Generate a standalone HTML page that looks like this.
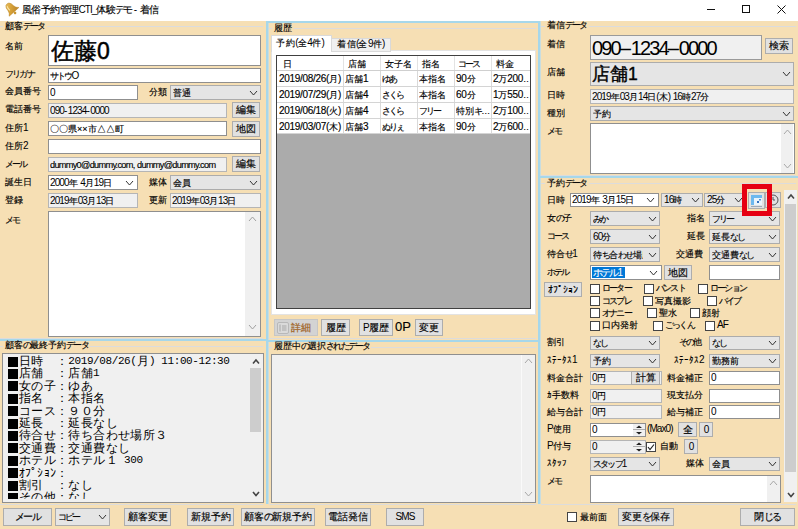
<!DOCTYPE html>
<html><head><meta charset="utf-8"><style>
html,body{margin:0;padding:0;}
body{width:798px;height:529px;overflow:hidden;position:relative;background:#F6DFB4;font-family:"Liberation Sans",sans-serif;font-feature-settings:"palt";}
.b{position:absolute;box-sizing:content-box;}
.t{position:absolute;white-space:nowrap;-webkit-text-stroke:0.15px currentColor;}
svg.b{overflow:visible;}
</style></head><body>
<div class="b" style="left:0px;top:0px;width:798px;height:21px;background:#fff;"></div>
<svg class="b" style="left:3px;top:1px" width="17" height="16"><defs><linearGradient id="gg" x1="0" y1="0" x2="1" y2="1"><stop offset="0" stop-color="#F0CF78"/><stop offset="0.5" stop-color="#D9A43A"/><stop offset="1" stop-color="#B8822A"/></linearGradient></defs><g transform="rotate(-42 8.5 8)"><path d="M6.5,1.8 Q8.5,0.6 10.5,1.8 Q12.2,3.2 12.2,7 Q12.4,10 15,11.8 L2,11.8 Q4.6,10 4.8,7 Q4.8,3.2 6.5,1.8 Z" fill="url(#gg)" stroke="#B98420" stroke-width="0.5"/><circle cx="8.5" cy="13.3" r="1.3" fill="#C99530"/><path d="M7,3 Q6.2,5 6.4,8" stroke="#FBE7A8" stroke-width="1" fill="none"/></g></svg>
<div class="t" style="left:22px;top:2.9px;font-size:9.5px;line-height:13.3px;color:#000;letter-spacing:-0.6px">風俗予約管理<span style="font-size:10px;letter-spacing:-0.9px;-webkit-text-stroke:0">CTI_</span>体験<span style="letter-spacing:-1.8px">デモ</span> <span style="font-size:10px;letter-spacing:-0.9px;-webkit-text-stroke:0"><span style="letter-spacing:0.4px">-</span></span> 着信</div>
<div class="b" style="left:707px;top:9px;width:8px;height:1px;background:#111;"></div>
<div class="b" style="left:742px;top:5px;width:6px;height:6px;background:transparent;border:1px solid #111;"></div>
<svg class="b" style="left:777px;top:5px" width="9" height="9"><path d="M0.5,0.5 L8.5,8.5 M8.5,0.5 L0.5,8.5" stroke="#111" stroke-width="1"/></svg>
<div class="b" style="left:-1px;top:26px;width:264px;height:311px;background:transparent;border:1px solid #DCDCDC;border-left:none;border-right:none"></div>
<div class="t" style="left:3px;top:21.5px;font-size:9px;line-height:9px;padding:0 2px 0 2px;background:#F6DFB4">顧客<span style="letter-spacing:-1.8px">データ</span></div>
<div class="t" style="left:5px;top:39.7px;font-size:9px;line-height:12.6px;color:#000;">名前</div>
<div class="t" style="left:5px;top:68.2px;font-size:9px;line-height:12.6px;color:#000;"><span style="letter-spacing:-1.8px">フリガナ</span></div>
<div class="t" style="left:5px;top:85.2px;font-size:9px;line-height:12.6px;color:#000;">会員番号</div>
<div class="t" style="left:5px;top:103.2px;font-size:9px;line-height:12.6px;color:#000;">電話番号</div>
<div class="t" style="left:5px;top:121.7px;font-size:9px;line-height:12.6px;color:#000;">住所<span style="font-size:10px;letter-spacing:-0.9px;-webkit-text-stroke:0">1</span></div>
<div class="t" style="left:5px;top:140.2px;font-size:9px;line-height:12.6px;color:#000;">住所<span style="font-size:10px;letter-spacing:-0.9px;-webkit-text-stroke:0">2</span></div>
<div class="t" style="left:5px;top:157.7px;font-size:9px;line-height:12.6px;color:#000;"><span style="letter-spacing:-1.8px">メール</span></div>
<div class="t" style="left:5px;top:175.7px;font-size:9px;line-height:12.6px;color:#000;">誕生日</div>
<div class="t" style="left:5px;top:193.7px;font-size:9px;line-height:12.6px;color:#000;">登録</div>
<div class="t" style="left:5px;top:213.7px;font-size:9px;line-height:12.6px;color:#000;"><span style="letter-spacing:-1.8px">メモ</span></div>
<div class="b" style="left:48px;top:35px;width:211px;height:29px;background:#fff;border:1px solid #8F8F8F;"></div>
<div class="b" style="left:51px;top:36px;width:208px;height:29px;overflow:hidden">
<div class="t" style="left:0;top:-1.0px;font-size:23px;line-height:32.2px;color:#000;-webkit-text-stroke:0.5px #000">佐藤0</div>
</div>
<div class="b" style="left:48px;top:68px;width:211px;height:13px;background:#fff;border:1px solid #8F8F8F;"></div>
<div class="b" style="left:50px;top:69px;width:209px;height:13px;overflow:hidden">
<div class="t" style="left:0;top:0.8px;font-size:9px;line-height:12.6px;color:#000;"><span style="letter-spacing:-1.8px">サトウ</span><span style="font-size:10px;letter-spacing:-0.9px;-webkit-text-stroke:0">O</span></div>
</div>
<div class="b" style="left:48px;top:85px;width:88px;height:13px;background:#fff;border:1px solid #8F8F8F;"></div>
<div class="b" style="left:50px;top:86px;width:86px;height:13px;overflow:hidden">
<div class="t" style="left:0;top:0.8px;font-size:9px;line-height:12.6px;color:#000;"><span style="font-size:10px;letter-spacing:-0.9px;-webkit-text-stroke:0">0</span></div>
</div>
<div class="t" style="left:149px;top:85.7px;font-size:9px;line-height:12.6px;color:#000;">分類</div>
<div class="b" style="left:170px;top:85px;width:89px;height:13px;background:#E5E5E5;border:1px solid #ACACAC;"></div>
<div class="b" style="left:173px;top:86px;width:71px;height:13px;overflow:hidden">
<div class="t" style="left:0;top:0.8px;font-size:9px;line-height:12.6px;">普通</div>
</div>
<svg class="b" style="left:248.5px;top:89.5px" width="9" height="6"><polyline points="1,1 4.5,5 8,1" fill="none" stroke="#333" stroke-width="1"/></svg>
<div class="b" style="left:48px;top:103px;width:177px;height:13px;background:#F0F0F0;border:1px solid #B5B5B5;"></div>
<div class="b" style="left:50px;top:104px;width:175px;height:13px;overflow:hidden">
<div class="t" style="left:0;top:0.8px;font-size:9px;line-height:12.6px;color:#000;"><span style="font-size:10px;letter-spacing:-0.9px;-webkit-text-stroke:0">090<span style="letter-spacing:0.4px">-</span>1234<span style="letter-spacing:0.4px">-</span>0000</span></div>
</div>
<div class="b" style="left:232px;top:102px;width:26px;height:14px;background:#E1E1E1;border:1px solid #ADADAD;"></div>
<div class="t" style="left:232px;top:102px;width:28px;height:16px;line-height:16px;text-align:center;font-size:9.5px;color:#000">編集</div>
<div class="b" style="left:48px;top:121px;width:177px;height:13px;background:#fff;border:1px solid #8F8F8F;"></div>
<div class="b" style="left:50px;top:122px;width:175px;height:13px;overflow:hidden">
<div class="t" style="left:0;top:0.8px;font-size:9px;line-height:12.6px;color:#000;">〇〇県××市△△町</div>
</div>
<div class="b" style="left:232px;top:121px;width:26px;height:14px;background:#E1E1E1;border:1px solid #ADADAD;"></div>
<div class="t" style="left:232px;top:121px;width:28px;height:16px;line-height:16px;text-align:center;font-size:9.5px;color:#000">地図</div>
<div class="b" style="left:48px;top:139px;width:211px;height:13px;background:#fff;border:1px solid #8F8F8F;"></div>
<div class="b" style="left:48px;top:157px;width:177px;height:13px;background:#F0F0F0;border:1px solid #B5B5B5;"></div>
<div class="b" style="left:50px;top:158px;width:175px;height:13px;overflow:hidden">
<div class="t" style="left:0;top:0.8px;font-size:9px;line-height:12.6px;color:#000;"><span style="font-size:9.2px;letter-spacing:-0.7px">dummy0@dummy.com,</span> <span style="font-size:9.2px;letter-spacing:-0.7px">dummy@dummy.com</span></div>
</div>
<div class="b" style="left:232px;top:156px;width:26px;height:14px;background:#E1E1E1;border:1px solid #ADADAD;"></div>
<div class="t" style="left:232px;top:156px;width:28px;height:16px;line-height:16px;text-align:center;font-size:9.5px;color:#000">編集</div>
<div class="b" style="left:48px;top:175px;width:88px;height:13px;background:#fff;border:1px solid #8F8F8F;"></div>
<div class="b" style="left:50px;top:176px;width:86px;height:13px;overflow:hidden">
<div class="t" style="left:0;top:0.8px;font-size:9px;line-height:12.6px;color:#000;"><span style="font-size:10px;letter-spacing:-0.9px;-webkit-text-stroke:0">2000</span>年 <span style="font-size:10px;letter-spacing:-0.9px;-webkit-text-stroke:0">4</span>月<span style="font-size:10px;letter-spacing:-0.9px;-webkit-text-stroke:0">19</span>日</div>
</div>
<svg class="b" style="left:124.5px;top:179.5px" width="9" height="6"><polyline points="1,1 4.5,5 8,1" fill="none" stroke="#333" stroke-width="1"/></svg>
<div class="t" style="left:149px;top:175.7px;font-size:9px;line-height:12.6px;color:#000;">媒体</div>
<div class="b" style="left:170px;top:175px;width:89px;height:13px;background:#E5E5E5;border:1px solid #ACACAC;"></div>
<div class="b" style="left:173px;top:176px;width:71px;height:13px;overflow:hidden">
<div class="t" style="left:0;top:0.8px;font-size:9px;line-height:12.6px;">会員</div>
</div>
<svg class="b" style="left:248.5px;top:179.5px" width="9" height="6"><polyline points="1,1 4.5,5 8,1" fill="none" stroke="#333" stroke-width="1"/></svg>
<div class="b" style="left:48px;top:193px;width:88px;height:13px;background:#F0F0F0;border:1px solid #B5B5B5;"></div>
<div class="b" style="left:50px;top:194px;width:86px;height:13px;overflow:hidden">
<div class="t" style="left:0;top:0.8px;font-size:9px;line-height:12.6px;color:#000;"><span style="font-size:10px;letter-spacing:-0.9px;-webkit-text-stroke:0">2019</span>年<span style="font-size:10px;letter-spacing:-0.9px;-webkit-text-stroke:0">03</span>月<span style="font-size:10px;letter-spacing:-0.9px;-webkit-text-stroke:0">13</span>日</div>
</div>
<div class="t" style="left:149px;top:193.7px;font-size:9px;line-height:12.6px;color:#000;">更新</div>
<div class="b" style="left:170px;top:193px;width:89px;height:13px;background:#F0F0F0;border:1px solid #B5B5B5;"></div>
<div class="b" style="left:172px;top:194px;width:87px;height:13px;overflow:hidden">
<div class="t" style="left:0;top:0.8px;font-size:9px;line-height:12.6px;color:#000;"><span style="font-size:10px;letter-spacing:-0.9px;-webkit-text-stroke:0">2019</span>年<span style="font-size:10px;letter-spacing:-0.9px;-webkit-text-stroke:0">03</span>月<span style="font-size:10px;letter-spacing:-0.9px;-webkit-text-stroke:0">13</span>日</div>
</div>
<div class="b" style="left:48px;top:211px;width:211px;height:124px;background:#fff;border:1px solid #8F8F8F;"></div>
<div class="b" style="left:245px;top:212px;width:15px;height:124px;background:#F0F0F0;"></div>
<svg class="b" style="left:248.0px;top:216.0px" width="9" height="6"><polyline points="1,5 4.5,1 8,5" fill="none" stroke="#A0A0A0" stroke-width="1"/></svg>
<svg class="b" style="left:248.0px;top:324.0px" width="9" height="6"><polyline points="1,1 4.5,5 8,1" fill="none" stroke="#A0A0A0" stroke-width="1"/></svg>
<div class="b" style="left:0px;top:339px;width:266px;height:2px;background:#A6D7EA;"></div>
<div class="b" style="left:-1px;top:346px;width:264px;height:157px;background:transparent;border:1px solid #DCDCDC;border-left:none;border-right:none"></div>
<div class="t" style="left:3px;top:341.0px;font-size:9px;line-height:9px;padding:0 2px 0 2px;background:#F6DFB4">顧客<span style="letter-spacing:-1.8px">の</span>最終予約<span style="letter-spacing:-1.8px">データ</span></div>
<div class="b" style="left:2px;top:353px;width:260px;height:148px;background:#F0F0F0;border:1px solid #8F8F8F;"></div>
<div class="b" style="left:250px;top:354px;width:13px;height:148px;background:#F0F0F0;"></div>
<div class="b" style="left:250px;top:368px;width:11px;height:64px;background:#CDCDCD;"></div>
<svg class="b" style="left:251.5px;top:358.8px" width="8" height="5.5"><polyline points="1,4.5 4.0,1 7,4.5" fill="none" stroke="#444" stroke-width="1.6"/></svg>
<svg class="b" style="left:251.5px;top:491.2px" width="8" height="5.5"><polyline points="1,1 4.0,4.5 7,1" fill="none" stroke="#444" stroke-width="1.6"/></svg>
<div class="b" style="left:3px;top:354px;width:247px;height:145px;overflow:hidden">
<div class="b" style="left:4.5px;top:2.5px;width:10px;height:10px;background:#000"></div><div class="t" style="left:15.7px;top:1.0px;font-size:12.4px;line-height:12.4px;-webkit-text-stroke:0;">日</div><div class="t" style="left:28.1px;top:1.0px;font-size:12.4px;line-height:12.4px;-webkit-text-stroke:0;">時</div><div class="t" style="left:52.9px;top:1.0px;font-size:12.4px;line-height:12.4px;-webkit-text-stroke:0;">：</div><div class="t" style="left:65.3px;top:1.0px;font-family:'Liberation Mono',monospace;font-size:11px;line-height:12.4px;-webkit-text-stroke:0;">2</div><div class="t" style="left:71.5px;top:1.0px;font-family:'Liberation Mono',monospace;font-size:11px;line-height:12.4px;-webkit-text-stroke:0;">0</div><div class="t" style="left:77.7px;top:1.0px;font-family:'Liberation Mono',monospace;font-size:11px;line-height:12.4px;-webkit-text-stroke:0;">1</div><div class="t" style="left:83.9px;top:1.0px;font-family:'Liberation Mono',monospace;font-size:11px;line-height:12.4px;-webkit-text-stroke:0;">9</div><div class="t" style="left:90.1px;top:1.0px;font-family:'Liberation Mono',monospace;font-size:11px;line-height:12.4px;-webkit-text-stroke:0;">/</div><div class="t" style="left:96.3px;top:1.0px;font-family:'Liberation Mono',monospace;font-size:11px;line-height:12.4px;-webkit-text-stroke:0;">0</div><div class="t" style="left:102.5px;top:1.0px;font-family:'Liberation Mono',monospace;font-size:11px;line-height:12.4px;-webkit-text-stroke:0;">8</div><div class="t" style="left:108.7px;top:1.0px;font-family:'Liberation Mono',monospace;font-size:11px;line-height:12.4px;-webkit-text-stroke:0;">/</div><div class="t" style="left:114.9px;top:1.0px;font-family:'Liberation Mono',monospace;font-size:11px;line-height:12.4px;-webkit-text-stroke:0;">2</div><div class="t" style="left:121.1px;top:1.0px;font-family:'Liberation Mono',monospace;font-size:11px;line-height:12.4px;-webkit-text-stroke:0;">6</div><div class="t" style="left:127.3px;top:1.0px;font-family:'Liberation Mono',monospace;font-size:11px;line-height:12.4px;-webkit-text-stroke:0;">(</div><div class="t" style="left:133.5px;top:1.0px;font-size:12.4px;line-height:12.4px;-webkit-text-stroke:0;">月</div><div class="t" style="left:145.9px;top:1.0px;font-family:'Liberation Mono',monospace;font-size:11px;line-height:12.4px;-webkit-text-stroke:0;">)</div><div class="t" style="left:158.3px;top:1.0px;font-family:'Liberation Mono',monospace;font-size:11px;line-height:12.4px;-webkit-text-stroke:0;">1</div><div class="t" style="left:164.5px;top:1.0px;font-family:'Liberation Mono',monospace;font-size:11px;line-height:12.4px;-webkit-text-stroke:0;">1</div><div class="t" style="left:170.7px;top:1.0px;font-family:'Liberation Mono',monospace;font-size:11px;line-height:12.4px;-webkit-text-stroke:0;">:</div><div class="t" style="left:176.9px;top:1.0px;font-family:'Liberation Mono',monospace;font-size:11px;line-height:12.4px;-webkit-text-stroke:0;">0</div><div class="t" style="left:183.1px;top:1.0px;font-family:'Liberation Mono',monospace;font-size:11px;line-height:12.4px;-webkit-text-stroke:0;">0</div><div class="t" style="left:189.3px;top:1.0px;font-family:'Liberation Mono',monospace;font-size:11px;line-height:12.4px;-webkit-text-stroke:0;">-</div><div class="t" style="left:195.5px;top:1.0px;font-family:'Liberation Mono',monospace;font-size:11px;line-height:12.4px;-webkit-text-stroke:0;">1</div><div class="t" style="left:201.7px;top:1.0px;font-family:'Liberation Mono',monospace;font-size:11px;line-height:12.4px;-webkit-text-stroke:0;">2</div><div class="t" style="left:207.9px;top:1.0px;font-family:'Liberation Mono',monospace;font-size:11px;line-height:12.4px;-webkit-text-stroke:0;">:</div><div class="t" style="left:214.1px;top:1.0px;font-family:'Liberation Mono',monospace;font-size:11px;line-height:12.4px;-webkit-text-stroke:0;">3</div><div class="t" style="left:220.3px;top:1.0px;font-family:'Liberation Mono',monospace;font-size:11px;line-height:12.4px;-webkit-text-stroke:0;">0</div>
<div class="b" style="left:4.5px;top:14.9px;width:10px;height:10px;background:#000"></div><div class="t" style="left:15.7px;top:13.4px;font-size:12.4px;line-height:12.4px;-webkit-text-stroke:0;">店</div><div class="t" style="left:28.1px;top:13.4px;font-size:12.4px;line-height:12.4px;-webkit-text-stroke:0;">舗</div><div class="t" style="left:52.9px;top:13.4px;font-size:12.4px;line-height:12.4px;-webkit-text-stroke:0;">：</div><div class="t" style="left:65.3px;top:13.4px;font-size:12.4px;line-height:12.4px;-webkit-text-stroke:0;">店</div><div class="t" style="left:77.7px;top:13.4px;font-size:12.4px;line-height:12.4px;-webkit-text-stroke:0;">舗</div><div class="t" style="left:90.1px;top:13.4px;font-family:'Liberation Mono',monospace;font-size:11px;line-height:12.4px;-webkit-text-stroke:0;">1</div>
<div class="b" style="left:4.5px;top:27.3px;width:10px;height:10px;background:#000"></div><div class="t" style="left:15.7px;top:25.8px;font-size:12.4px;line-height:12.4px;-webkit-text-stroke:0;">女</div><div class="t" style="left:28.1px;top:25.8px;font-size:12.4px;line-height:12.4px;-webkit-text-stroke:0;">の</div><div class="t" style="left:40.5px;top:25.8px;font-size:12.4px;line-height:12.4px;-webkit-text-stroke:0;">子</div><div class="t" style="left:52.9px;top:25.8px;font-size:12.4px;line-height:12.4px;-webkit-text-stroke:0;">：</div><div class="t" style="left:65.3px;top:25.8px;font-size:12.4px;line-height:12.4px;-webkit-text-stroke:0;">ゆ</div><div class="t" style="left:77.7px;top:25.8px;font-size:12.4px;line-height:12.4px;-webkit-text-stroke:0;">あ</div>
<div class="b" style="left:4.5px;top:39.7px;width:10px;height:10px;background:#000"></div><div class="t" style="left:15.7px;top:38.2px;font-size:12.4px;line-height:12.4px;-webkit-text-stroke:0;">指</div><div class="t" style="left:28.1px;top:38.2px;font-size:12.4px;line-height:12.4px;-webkit-text-stroke:0;">名</div><div class="t" style="left:52.9px;top:38.2px;font-size:12.4px;line-height:12.4px;-webkit-text-stroke:0;">：</div><div class="t" style="left:65.3px;top:38.2px;font-size:12.4px;line-height:12.4px;-webkit-text-stroke:0;">本</div><div class="t" style="left:77.7px;top:38.2px;font-size:12.4px;line-height:12.4px;-webkit-text-stroke:0;">指</div><div class="t" style="left:90.1px;top:38.2px;font-size:12.4px;line-height:12.4px;-webkit-text-stroke:0;">名</div>
<div class="b" style="left:4.5px;top:52.1px;width:10px;height:10px;background:#000"></div><div class="t" style="left:15.7px;top:50.6px;font-size:12.4px;line-height:12.4px;-webkit-text-stroke:0;">コ</div><div class="t" style="left:28.1px;top:50.6px;font-size:12.4px;line-height:12.4px;-webkit-text-stroke:0;">ー</div><div class="t" style="left:40.5px;top:50.6px;font-size:12.4px;line-height:12.4px;-webkit-text-stroke:0;">ス</div><div class="t" style="left:52.9px;top:50.6px;font-size:12.4px;line-height:12.4px;-webkit-text-stroke:0;">：</div><div class="t" style="left:65.3px;top:50.6px;font-size:12.4px;line-height:12.4px;-webkit-text-stroke:0;">９</div><div class="t" style="left:77.7px;top:50.6px;font-size:12.4px;line-height:12.4px;-webkit-text-stroke:0;">０</div><div class="t" style="left:90.1px;top:50.6px;font-size:12.4px;line-height:12.4px;-webkit-text-stroke:0;">分</div>
<div class="b" style="left:4.5px;top:64.5px;width:10px;height:10px;background:#000"></div><div class="t" style="left:15.7px;top:63.0px;font-size:12.4px;line-height:12.4px;-webkit-text-stroke:0;">延</div><div class="t" style="left:28.1px;top:63.0px;font-size:12.4px;line-height:12.4px;-webkit-text-stroke:0;">長</div><div class="t" style="left:52.9px;top:63.0px;font-size:12.4px;line-height:12.4px;-webkit-text-stroke:0;">：</div><div class="t" style="left:65.3px;top:63.0px;font-size:12.4px;line-height:12.4px;-webkit-text-stroke:0;">延</div><div class="t" style="left:77.7px;top:63.0px;font-size:12.4px;line-height:12.4px;-webkit-text-stroke:0;">長</div><div class="t" style="left:90.1px;top:63.0px;font-size:12.4px;line-height:12.4px;-webkit-text-stroke:0;">な</div><div class="t" style="left:102.5px;top:63.0px;font-size:12.4px;line-height:12.4px;-webkit-text-stroke:0;">し</div>
<div class="b" style="left:4.5px;top:76.9px;width:10px;height:10px;background:#000"></div><div class="t" style="left:15.7px;top:75.4px;font-size:12.4px;line-height:12.4px;-webkit-text-stroke:0;">待</div><div class="t" style="left:28.1px;top:75.4px;font-size:12.4px;line-height:12.4px;-webkit-text-stroke:0;">合</div><div class="t" style="left:40.5px;top:75.4px;font-size:12.4px;line-height:12.4px;-webkit-text-stroke:0;">せ</div><div class="t" style="left:52.9px;top:75.4px;font-size:12.4px;line-height:12.4px;-webkit-text-stroke:0;">：</div><div class="t" style="left:65.3px;top:75.4px;font-size:12.4px;line-height:12.4px;-webkit-text-stroke:0;">待</div><div class="t" style="left:77.7px;top:75.4px;font-size:12.4px;line-height:12.4px;-webkit-text-stroke:0;">ち</div><div class="t" style="left:90.1px;top:75.4px;font-size:12.4px;line-height:12.4px;-webkit-text-stroke:0;">合</div><div class="t" style="left:102.5px;top:75.4px;font-size:12.4px;line-height:12.4px;-webkit-text-stroke:0;">わ</div><div class="t" style="left:114.9px;top:75.4px;font-size:12.4px;line-height:12.4px;-webkit-text-stroke:0;">せ</div><div class="t" style="left:127.3px;top:75.4px;font-size:12.4px;line-height:12.4px;-webkit-text-stroke:0;">場</div><div class="t" style="left:139.7px;top:75.4px;font-size:12.4px;line-height:12.4px;-webkit-text-stroke:0;">所</div><div class="t" style="left:152.1px;top:75.4px;font-size:12.4px;line-height:12.4px;-webkit-text-stroke:0;">３</div>
<div class="b" style="left:4.5px;top:89.3px;width:10px;height:10px;background:#000"></div><div class="t" style="left:15.7px;top:87.8px;font-size:12.4px;line-height:12.4px;-webkit-text-stroke:0;">交</div><div class="t" style="left:28.1px;top:87.8px;font-size:12.4px;line-height:12.4px;-webkit-text-stroke:0;">通</div><div class="t" style="left:40.5px;top:87.8px;font-size:12.4px;line-height:12.4px;-webkit-text-stroke:0;">費</div><div class="t" style="left:52.9px;top:87.8px;font-size:12.4px;line-height:12.4px;-webkit-text-stroke:0;">：</div><div class="t" style="left:65.3px;top:87.8px;font-size:12.4px;line-height:12.4px;-webkit-text-stroke:0;">交</div><div class="t" style="left:77.7px;top:87.8px;font-size:12.4px;line-height:12.4px;-webkit-text-stroke:0;">通</div><div class="t" style="left:90.1px;top:87.8px;font-size:12.4px;line-height:12.4px;-webkit-text-stroke:0;">費</div><div class="t" style="left:102.5px;top:87.8px;font-size:12.4px;line-height:12.4px;-webkit-text-stroke:0;">な</div><div class="t" style="left:114.9px;top:87.8px;font-size:12.4px;line-height:12.4px;-webkit-text-stroke:0;">し</div>
<div class="b" style="left:4.5px;top:101.7px;width:10px;height:10px;background:#000"></div><div class="t" style="left:15.7px;top:100.2px;font-size:12.4px;line-height:12.4px;-webkit-text-stroke:0;">ホ</div><div class="t" style="left:28.1px;top:100.2px;font-size:12.4px;line-height:12.4px;-webkit-text-stroke:0;">テ</div><div class="t" style="left:40.5px;top:100.2px;font-size:12.4px;line-height:12.4px;-webkit-text-stroke:0;">ル</div><div class="t" style="left:52.9px;top:100.2px;font-size:12.4px;line-height:12.4px;-webkit-text-stroke:0;">：</div><div class="t" style="left:65.3px;top:100.2px;font-size:12.4px;line-height:12.4px;-webkit-text-stroke:0;">ホ</div><div class="t" style="left:77.7px;top:100.2px;font-size:12.4px;line-height:12.4px;-webkit-text-stroke:0;">テ</div><div class="t" style="left:90.1px;top:100.2px;font-size:12.4px;line-height:12.4px;-webkit-text-stroke:0;">ル</div><div class="t" style="left:102.5px;top:100.2px;font-size:12.4px;line-height:12.4px;-webkit-text-stroke:0;">１</div><div class="t" style="left:121.1px;top:100.2px;font-family:'Liberation Mono',monospace;font-size:11px;line-height:12.4px;-webkit-text-stroke:0;">3</div><div class="t" style="left:127.3px;top:100.2px;font-family:'Liberation Mono',monospace;font-size:11px;line-height:12.4px;-webkit-text-stroke:0;">0</div><div class="t" style="left:133.5px;top:100.2px;font-family:'Liberation Mono',monospace;font-size:11px;line-height:12.4px;-webkit-text-stroke:0;">0</div>
<div class="b" style="left:4.5px;top:114.1px;width:10px;height:10px;background:#000"></div><div class="t" style="left:15.7px;top:112.6px;font-size:12.4px;line-height:12.4px;-webkit-text-stroke:0;">ｵ</div><div class="t" style="left:21.9px;top:112.6px;font-size:12.4px;line-height:12.4px;-webkit-text-stroke:0;">ﾌ</div><div class="t" style="left:28.1px;top:112.6px;font-size:12.4px;line-height:12.4px;-webkit-text-stroke:0;">ﾟ</div><div class="t" style="left:34.3px;top:112.6px;font-size:12.4px;line-height:12.4px;-webkit-text-stroke:0;">ｼ</div><div class="t" style="left:40.5px;top:112.6px;font-size:12.4px;line-height:12.4px;-webkit-text-stroke:0;">ｮ</div><div class="t" style="left:46.7px;top:112.6px;font-size:12.4px;line-height:12.4px;-webkit-text-stroke:0;">ﾝ</div><div class="t" style="left:52.9px;top:112.6px;font-size:12.4px;line-height:12.4px;-webkit-text-stroke:0;">：</div>
<div class="b" style="left:4.5px;top:126.5px;width:10px;height:10px;background:#000"></div><div class="t" style="left:15.7px;top:125.0px;font-size:12.4px;line-height:12.4px;-webkit-text-stroke:0;">割</div><div class="t" style="left:28.1px;top:125.0px;font-size:12.4px;line-height:12.4px;-webkit-text-stroke:0;">引</div><div class="t" style="left:52.9px;top:125.0px;font-size:12.4px;line-height:12.4px;-webkit-text-stroke:0;">：</div><div class="t" style="left:65.3px;top:125.0px;font-size:12.4px;line-height:12.4px;-webkit-text-stroke:0;">な</div><div class="t" style="left:77.7px;top:125.0px;font-size:12.4px;line-height:12.4px;-webkit-text-stroke:0;">し</div>
<div class="b" style="left:4.5px;top:138.9px;width:10px;height:10px;background:#000"></div><div class="t" style="left:15.7px;top:137.4px;font-size:12.4px;line-height:12.4px;-webkit-text-stroke:0;">そ</div><div class="t" style="left:28.1px;top:137.4px;font-size:12.4px;line-height:12.4px;-webkit-text-stroke:0;">の</div><div class="t" style="left:40.5px;top:137.4px;font-size:12.4px;line-height:12.4px;-webkit-text-stroke:0;">他</div><div class="t" style="left:52.9px;top:137.4px;font-size:12.4px;line-height:12.4px;-webkit-text-stroke:0;">：</div><div class="t" style="left:65.3px;top:137.4px;font-size:12.4px;line-height:12.4px;-webkit-text-stroke:0;">な</div><div class="t" style="left:77.7px;top:137.4px;font-size:12.4px;line-height:12.4px;-webkit-text-stroke:0;">し</div>
</div>
<div class="b" style="left:266px;top:21px;width:2px;height:483px;background:#A6D7EA;"></div>
<div class="b" style="left:268px;top:21px;width:1px;height:483px;background:#C9DDDF;"></div>
<div class="b" style="left:538px;top:21px;width:2px;height:483px;background:#A6D7EA;"></div>
<div class="b" style="left:540px;top:21px;width:1px;height:483px;background:#C9DDDF;"></div>
<div class="b" style="left:266px;top:21px;width:274px;height:2px;background:#A6D7EA;"></div>
<div class="b" style="left:266px;top:340px;width:274px;height:2px;background:#A6D7EA;"></div>
<div class="b" style="left:269px;top:28px;width:267px;height:309px;background:transparent;border:1px solid #DCDCDC;border-left:none;border-right:none"></div>
<div class="t" style="left:272px;top:24.0px;font-size:9px;line-height:9px;padding:0 2px 0 2px;background:#F6DFB4">履歴</div>
<div class="b" style="left:271px;top:50px;width:263px;height:263px;background:#fff;border:1px solid #E3E3E3;"></div>
<div class="b" style="left:331px;top:38px;width:58px;height:12px;background:#F0F0F0;border:1px solid #D9D9D9;"></div>
<div class="t" style="left:337px;top:38.2px;font-size:9px;line-height:12.6px;color:#000;letter-spacing:0.5px">着信<span style="font-size:10px;letter-spacing:-0.9px;-webkit-text-stroke:0">(</span>全<span style="font-size:10px;letter-spacing:-0.9px;-webkit-text-stroke:0">9</span>件<span style="font-size:10px;letter-spacing:-0.9px;-webkit-text-stroke:0">)</span></div>
<div class="b" style="left:271px;top:35px;width:59px;height:16px;background:#fff;border:1px solid #D9D9D9;border-bottom:none"></div>
<div class="t" style="left:276px;top:36.7px;font-size:9px;line-height:12.6px;color:#000;letter-spacing:0.6px">予約<span style="font-size:10px;letter-spacing:-0.9px;-webkit-text-stroke:0">(</span>全<span style="font-size:10px;letter-spacing:-0.9px;-webkit-text-stroke:0">4</span>件<span style="font-size:10px;letter-spacing:-0.9px;-webkit-text-stroke:0">)</span></div>
<div class="b" style="left:276px;top:55px;width:253px;height:252px;background:#ABABAB;border:1px solid #404040;"></div>
<div class="b" style="left:277px;top:56px;width:253px;height:14px;background:#fff;"></div>
<div class="b" style="left:343px;top:56px;width:1px;height:14px;background:#E3E3E3;"></div>
<div class="b" style="left:380px;top:56px;width:1px;height:14px;background:#E3E3E3;"></div>
<div class="b" style="left:417px;top:56px;width:1px;height:14px;background:#E3E3E3;"></div>
<div class="b" style="left:454px;top:56px;width:1px;height:14px;background:#E3E3E3;"></div>
<div class="b" style="left:491px;top:56px;width:1px;height:14px;background:#E3E3E3;"></div>
<div class="b" style="left:277px;top:70px;width:253px;height:1px;background:#CFCFCF;"></div>
<div class="t" style="left:283px;top:57.7px;font-size:9px;line-height:12.6px;color:#000;">日</div>
<div class="t" style="left:348px;top:57.7px;font-size:9px;line-height:12.6px;color:#000;">店舗</div>
<div class="t" style="left:385px;top:57.7px;font-size:9px;line-height:12.6px;color:#000;">女子名</div>
<div class="t" style="left:422px;top:57.7px;font-size:9px;line-height:12.6px;color:#000;">指名</div>
<div class="t" style="left:458px;top:57.7px;font-size:9px;line-height:12.6px;color:#000;"><span style="letter-spacing:-1.8px">コース</span></div>
<div class="t" style="left:496px;top:57.7px;font-size:9px;line-height:12.6px;color:#000;">料金</div>
<div class="b" style="left:277px;top:71px;width:253px;height:15px;background:#fff;"></div>
<div class="b" style="left:343px;top:71px;width:1px;height:15px;background:#D9D9D9;"></div>
<div class="b" style="left:380px;top:71px;width:1px;height:15px;background:#D9D9D9;"></div>
<div class="b" style="left:417px;top:71px;width:1px;height:15px;background:#D9D9D9;"></div>
<div class="b" style="left:454px;top:71px;width:1px;height:15px;background:#D9D9D9;"></div>
<div class="b" style="left:491px;top:71px;width:1px;height:15px;background:#D9D9D9;"></div>
<div class="b" style="left:277px;top:86px;width:253px;height:1px;background:#D4D4D4;"></div>
<div class="b" style="left:279px;top:71px;width:63px;height:15px;overflow:hidden">
<div class="t" style="left:0px;top:1.9px;font-size:9px;line-height:12.6px;color:#000;"><span style="font-size:10px;letter-spacing:-0.3px">2019/08/26(</span>月<span style="font-size:10px;letter-spacing:-0.3px">)</span></div>
</div>
<div class="b" style="left:345px;top:71px;width:34px;height:15px;overflow:hidden">
<div class="t" style="left:0px;top:1.9px;font-size:9px;line-height:12.6px;color:#000;">店舗<span style="font-size:10px;letter-spacing:-0.3px">1</span></div>
</div>
<div class="b" style="left:382px;top:71px;width:34px;height:15px;overflow:hidden">
<div class="t" style="left:0px;top:1.9px;font-size:9px;line-height:12.6px;color:#000;"><span style="letter-spacing:-1.8px">ゆあ</span></div>
</div>
<div class="b" style="left:419px;top:71px;width:34px;height:15px;overflow:hidden">
<div class="t" style="left:0px;top:1.9px;font-size:9px;line-height:12.6px;color:#000;">本指名</div>
</div>
<div class="b" style="left:456px;top:71px;width:34px;height:15px;overflow:hidden">
<div class="t" style="left:0px;top:1.9px;font-size:9px;line-height:12.6px;color:#000;"><span style="font-size:10px;letter-spacing:-0.3px">90</span>分</div>
</div>
<div class="b" style="left:493px;top:71px;width:36px;height:15px;overflow:hidden">
<div class="t" style="left:0px;top:1.9px;font-size:9px;line-height:12.6px;color:#000;"><span style="font-size:10px;letter-spacing:-0.3px">2</span>万<span style="font-size:10px;letter-spacing:-0.3px">200</span>…</div>
</div>
<div class="b" style="left:277px;top:87px;width:253px;height:15px;background:#fff;"></div>
<div class="b" style="left:343px;top:87px;width:1px;height:15px;background:#D9D9D9;"></div>
<div class="b" style="left:380px;top:87px;width:1px;height:15px;background:#D9D9D9;"></div>
<div class="b" style="left:417px;top:87px;width:1px;height:15px;background:#D9D9D9;"></div>
<div class="b" style="left:454px;top:87px;width:1px;height:15px;background:#D9D9D9;"></div>
<div class="b" style="left:491px;top:87px;width:1px;height:15px;background:#D9D9D9;"></div>
<div class="b" style="left:277px;top:102px;width:253px;height:1px;background:#D4D4D4;"></div>
<div class="b" style="left:279px;top:87px;width:63px;height:15px;overflow:hidden">
<div class="t" style="left:0px;top:1.7px;font-size:9px;line-height:12.6px;color:#000;"><span style="font-size:10px;letter-spacing:-0.3px">2019/07/29(</span>月<span style="font-size:10px;letter-spacing:-0.3px">)</span></div>
</div>
<div class="b" style="left:345px;top:87px;width:34px;height:15px;overflow:hidden">
<div class="t" style="left:0px;top:1.7px;font-size:9px;line-height:12.6px;color:#000;">店舗<span style="font-size:10px;letter-spacing:-0.3px">4</span></div>
</div>
<div class="b" style="left:382px;top:87px;width:34px;height:15px;overflow:hidden">
<div class="t" style="left:0px;top:1.7px;font-size:9px;line-height:12.6px;color:#000;"><span style="letter-spacing:-1.8px">さくら</span></div>
</div>
<div class="b" style="left:419px;top:87px;width:34px;height:15px;overflow:hidden">
<div class="t" style="left:0px;top:1.7px;font-size:9px;line-height:12.6px;color:#000;">本指名</div>
</div>
<div class="b" style="left:456px;top:87px;width:34px;height:15px;overflow:hidden">
<div class="t" style="left:0px;top:1.7px;font-size:9px;line-height:12.6px;color:#000;"><span style="font-size:10px;letter-spacing:-0.3px">60</span>分</div>
</div>
<div class="b" style="left:493px;top:87px;width:36px;height:15px;overflow:hidden">
<div class="t" style="left:0px;top:1.7px;font-size:9px;line-height:12.6px;color:#000;"><span style="font-size:10px;letter-spacing:-0.3px">1</span>万<span style="font-size:10px;letter-spacing:-0.3px">550</span>…</div>
</div>
<div class="b" style="left:277px;top:103px;width:253px;height:15px;background:#fff;"></div>
<div class="b" style="left:343px;top:103px;width:1px;height:15px;background:#D9D9D9;"></div>
<div class="b" style="left:380px;top:103px;width:1px;height:15px;background:#D9D9D9;"></div>
<div class="b" style="left:417px;top:103px;width:1px;height:15px;background:#D9D9D9;"></div>
<div class="b" style="left:454px;top:103px;width:1px;height:15px;background:#D9D9D9;"></div>
<div class="b" style="left:491px;top:103px;width:1px;height:15px;background:#D9D9D9;"></div>
<div class="b" style="left:277px;top:118px;width:253px;height:1px;background:#D4D4D4;"></div>
<div class="b" style="left:279px;top:103px;width:63px;height:15px;overflow:hidden">
<div class="t" style="left:0px;top:1.6px;font-size:9px;line-height:12.6px;color:#000;"><span style="font-size:10px;letter-spacing:-0.3px">2019/06/18(</span>火<span style="font-size:10px;letter-spacing:-0.3px">)</span></div>
</div>
<div class="b" style="left:345px;top:103px;width:34px;height:15px;overflow:hidden">
<div class="t" style="left:0px;top:1.6px;font-size:9px;line-height:12.6px;color:#000;">店舗<span style="font-size:10px;letter-spacing:-0.3px">4</span></div>
</div>
<div class="b" style="left:382px;top:103px;width:34px;height:15px;overflow:hidden">
<div class="t" style="left:0px;top:1.6px;font-size:9px;line-height:12.6px;color:#000;"><span style="letter-spacing:-1.8px">さくら</span></div>
</div>
<div class="b" style="left:419px;top:103px;width:34px;height:15px;overflow:hidden">
<div class="t" style="left:0px;top:1.6px;font-size:9px;line-height:12.6px;color:#000;"><span style="letter-spacing:-1.8px">フリー</span></div>
</div>
<div class="b" style="left:456px;top:103px;width:34px;height:15px;overflow:hidden">
<div class="t" style="left:0px;top:1.6px;font-size:9px;line-height:12.6px;color:#000;">特別<span style="letter-spacing:-1.8px">キ</span>…</div>
</div>
<div class="b" style="left:493px;top:103px;width:36px;height:15px;overflow:hidden">
<div class="t" style="left:0px;top:1.6px;font-size:9px;line-height:12.6px;color:#000;"><span style="font-size:10px;letter-spacing:-0.3px">2</span>万<span style="font-size:10px;letter-spacing:-0.3px">100</span>…</div>
</div>
<div class="b" style="left:277px;top:119px;width:253px;height:14px;background:#fff;"></div>
<div class="b" style="left:343px;top:119px;width:1px;height:14px;background:#D9D9D9;"></div>
<div class="b" style="left:380px;top:119px;width:1px;height:14px;background:#D9D9D9;"></div>
<div class="b" style="left:417px;top:119px;width:1px;height:14px;background:#D9D9D9;"></div>
<div class="b" style="left:454px;top:119px;width:1px;height:14px;background:#D9D9D9;"></div>
<div class="b" style="left:491px;top:119px;width:1px;height:14px;background:#D9D9D9;"></div>
<div class="b" style="left:277px;top:133px;width:253px;height:1px;background:#D4D4D4;"></div>
<div class="b" style="left:279px;top:119px;width:63px;height:14px;overflow:hidden">
<div class="t" style="left:0px;top:1.5px;font-size:9px;line-height:12.6px;color:#000;"><span style="font-size:10px;letter-spacing:-0.3px">2019/03/07(</span>木<span style="font-size:10px;letter-spacing:-0.3px">)</span></div>
</div>
<div class="b" style="left:345px;top:119px;width:34px;height:14px;overflow:hidden">
<div class="t" style="left:0px;top:1.5px;font-size:9px;line-height:12.6px;color:#000;">店舗<span style="font-size:10px;letter-spacing:-0.3px">3</span></div>
</div>
<div class="b" style="left:382px;top:119px;width:34px;height:14px;overflow:hidden">
<div class="t" style="left:0px;top:1.5px;font-size:9px;line-height:12.6px;color:#000;"><span style="letter-spacing:-1.8px">ぬりぇ</span></div>
</div>
<div class="b" style="left:419px;top:119px;width:34px;height:14px;overflow:hidden">
<div class="t" style="left:0px;top:1.5px;font-size:9px;line-height:12.6px;color:#000;">本指名</div>
</div>
<div class="b" style="left:456px;top:119px;width:34px;height:14px;overflow:hidden">
<div class="t" style="left:0px;top:1.5px;font-size:9px;line-height:12.6px;color:#000;"><span style="font-size:10px;letter-spacing:-0.3px">90</span>分</div>
</div>
<div class="b" style="left:493px;top:119px;width:36px;height:14px;overflow:hidden">
<div class="t" style="left:0px;top:1.5px;font-size:9px;line-height:12.6px;color:#000;"><span style="font-size:10px;letter-spacing:-0.3px">2</span>万<span style="font-size:10px;letter-spacing:-0.3px">600</span>…</div>
</div>
<div class="b" style="left:274px;top:319px;width:42px;height:15px;background:#D3D3D3;border:1px solid #C6C6C6;"></div>
<svg class="b" style="left:277px;top:322px" width="12" height="12"><rect x="0.5" y="0.5" width="11" height="11" rx="1.5" fill="#DADADA" stroke="#B8B8B8"/><path d="M3,2.5 V9.5 M5,4 H9.5 M5,6 H9.5 M5,8 H9.5" stroke="#A8A8A8"/></svg>
<div class="t" style="left:291px;top:320.9px;font-size:9.5px;line-height:13.3px;color:#A0621E;-webkit-text-stroke:0.2px #A0621E">詳細</div>
<div class="b" style="left:321px;top:319px;width:27px;height:15px;background:#E1E1E1;border:1px solid #ADADAD;"></div>
<div class="t" style="left:321px;top:319px;width:29px;height:17px;line-height:17px;text-align:center;font-size:9.5px;color:#000">履歴</div>
<div class="b" style="left:359px;top:319px;width:32px;height:15px;background:#E1E1E1;border:1px solid #ADADAD;"></div>
<div class="t" style="left:359px;top:319px;width:34px;height:17px;line-height:17px;text-align:center;font-size:9.5px;color:#000"><span style="font-size:10px;letter-spacing:-0.9px;-webkit-text-stroke:0">P</span>履歴</div>
<div class="t" style="left:395px;top:318.4px;font-size:13px;line-height:18.2px;color:#000;">0P</div>
<div class="b" style="left:415px;top:319px;width:26px;height:15px;background:#E1E1E1;border:1px solid #ADADAD;"></div>
<div class="t" style="left:415px;top:319px;width:28px;height:17px;line-height:17px;text-align:center;font-size:9.5px;color:#000">変更</div>
<div class="b" style="left:269px;top:347px;width:267px;height:156px;background:transparent;border:1px solid #DCDCDC;border-left:none;border-right:none"></div>
<div class="t" style="left:272px;top:342.0px;font-size:9px;line-height:9px;padding:0 2px 0 2px;background:#F6DFB4">履歴中<span style="letter-spacing:-1.8px">の</span>選択<span style="letter-spacing:-1.8px">されたデータ</span></div>
<div class="b" style="left:271px;top:354px;width:263px;height:147px;background:#F0F0F0;border:1px solid #8F8F8F;"></div>
<div class="b" style="left:521px;top:355px;width:1px;height:147px;background:#FAFAFA;"></div>
<svg class="b" style="left:523.5px;top:358.0px" width="9" height="6"><polyline points="1,5 4.5,1 8,5" fill="none" stroke="#A8A8A8" stroke-width="1"/></svg>
<svg class="b" style="left:523.5px;top:491.0px" width="9" height="6"><polyline points="1,1 4.5,5 8,1" fill="none" stroke="#A8A8A8" stroke-width="1"/></svg>
<div class="b" style="left:540px;top:176px;width:258px;height:2px;background:#A6D7EA;"></div>
<div class="b" style="left:541px;top:26px;width:255px;height:148px;background:transparent;border:1px solid #DCDCDC;border-left:none;border-right:none"></div>
<div class="t" style="left:545px;top:21.0px;font-size:9px;line-height:9px;padding:0 2px 0 2px;background:#F6DFB4">着信<span style="letter-spacing:-1.8px">データ</span></div>
<div class="t" style="left:547px;top:38.2px;font-size:9px;line-height:12.6px;color:#000;">着信</div>
<div class="b" style="left:590px;top:35px;width:170px;height:23px;background:#F0F0F0;border:1px solid #9A9A9A;"></div>
<div class="b" style="left:592px;top:36px;width:168px;height:23px;overflow:hidden">
<div class="t" style="left:0;top:-1.9px;font-size:20px;line-height:28.0px;color:#000;"><span style="letter-spacing:-1.9px;-webkit-text-stroke:0">090</span>–<span style="letter-spacing:-1.9px;-webkit-text-stroke:0">1234</span>–<span style="letter-spacing:-1.9px;-webkit-text-stroke:0">0000</span></div>
</div>
<div class="b" style="left:765px;top:38px;width:26px;height:14px;background:#E1E1E1;border:1px solid #ADADAD;"></div>
<div class="t" style="left:765px;top:38px;width:28px;height:16px;line-height:16px;text-align:center;font-size:9.5px;color:#000">検索</div>
<div class="t" style="left:547px;top:66.2px;font-size:9px;line-height:12.6px;color:#000;">店舗</div>
<div class="b" style="left:590px;top:62px;width:202px;height:22px;background:#E5E5E5;border:1px solid #ACACAC;"></div>
<div class="b" style="left:592px;top:63px;width:185px;height:22px;overflow:hidden">
<div class="t" style="left:0;top:-0.7px;font-size:17.5px;line-height:24.5px;-webkit-text-stroke:0.4px #000">店舗1</div>
</div>
<svg class="b" style="left:781.5px;top:71.0px" width="9" height="6"><polyline points="1,1 4.5,5 8,1" fill="none" stroke="#333" stroke-width="1"/></svg>
<div class="t" style="left:547px;top:89.2px;font-size:9px;line-height:12.6px;color:#000;">日時</div>
<div class="b" style="left:590px;top:89px;width:202px;height:13px;background:#F0F0F0;border:1px solid #B5B5B5;"></div>
<div class="b" style="left:592px;top:90px;width:200px;height:13px;overflow:hidden">
<div class="t" style="left:0;top:0.8px;font-size:9px;line-height:12.6px;color:#000;"><span style="font-size:10px;letter-spacing:-0.9px;-webkit-text-stroke:0">2019</span>年<span style="font-size:10px;letter-spacing:-0.9px;-webkit-text-stroke:0">03</span>月<span style="font-size:10px;letter-spacing:-0.9px;-webkit-text-stroke:0">14</span>日<span style="font-size:10px;letter-spacing:-0.9px;-webkit-text-stroke:0">(</span>木<span style="font-size:10px;letter-spacing:-0.9px;-webkit-text-stroke:0">)</span> <span style="font-size:10px;letter-spacing:-0.9px;-webkit-text-stroke:0">16</span>時<span style="font-size:10px;letter-spacing:-0.9px;-webkit-text-stroke:0">27</span>分</div>
</div>
<div class="t" style="left:547px;top:106.7px;font-size:9px;line-height:12.6px;color:#000;">種別</div>
<div class="b" style="left:590px;top:106px;width:202px;height:13px;background:#E5E5E5;border:1px solid #ACACAC;"></div>
<div class="b" style="left:593px;top:107px;width:184px;height:13px;overflow:hidden">
<div class="t" style="left:0;top:0.8px;font-size:9px;line-height:12.6px;">予約</div>
</div>
<svg class="b" style="left:781.5px;top:110.5px" width="9" height="6"><polyline points="1,1 4.5,5 8,1" fill="none" stroke="#333" stroke-width="1"/></svg>
<div class="t" style="left:547px;top:124.7px;font-size:9px;line-height:12.6px;color:#000;"><span style="letter-spacing:-1.8px">メモ</span></div>
<div class="b" style="left:590px;top:123px;width:203px;height:49px;background:#fff;border:1px solid #8F8F8F;"></div>
<div class="b" style="left:781px;top:124px;width:12px;height:49px;background:#F0F0F0;"></div>
<svg class="b" style="left:782.5px;top:129.0px" width="9" height="6"><polyline points="1,5 4.5,1 8,5" fill="none" stroke="#A8A8A8" stroke-width="1"/></svg>
<svg class="b" style="left:782.5px;top:163.0px" width="9" height="6"><polyline points="1,1 4.5,5 8,1" fill="none" stroke="#A8A8A8" stroke-width="1"/></svg>
<div class="b" style="left:541px;top:183px;width:255px;height:320px;background:transparent;border:1px solid #DCDCDC;border-left:none;border-right:none"></div>
<div class="t" style="left:545px;top:179.0px;font-size:9px;line-height:9px;padding:0 2px 0 2px;background:#F6DFB4">予約<span style="letter-spacing:-1.8px">データ</span></div>
<div class="t" style="left:547px;top:193.7px;font-size:9px;line-height:12.6px;color:#000;">日時</div>
<div class="b" style="left:570px;top:193px;width:87px;height:12px;background:#fff;border:1px solid #8F8F8F;"></div>
<div class="b" style="left:572px;top:194px;width:85px;height:12px;overflow:hidden">
<div class="t" style="left:0;top:0.3px;font-size:9px;line-height:12.6px;color:#000;"><span style="font-size:10px;letter-spacing:-0.9px;-webkit-text-stroke:0">2019</span>年 <span style="font-size:10px;letter-spacing:-0.9px;-webkit-text-stroke:0">3</span>月<span style="font-size:10px;letter-spacing:-0.9px;-webkit-text-stroke:0">15</span>日</div>
</div>
<svg class="b" style="left:645.5px;top:197.0px" width="9" height="6"><polyline points="1,1 4.5,5 8,1" fill="none" stroke="#333" stroke-width="1"/></svg>
<div class="b" style="left:661px;top:193px;width:40px;height:12px;background:#E5E5E5;border:1px solid #ACACAC;"></div>
<div class="b" style="left:664px;top:194px;width:22px;height:12px;overflow:hidden">
<div class="t" style="left:0;top:0.3px;font-size:9px;line-height:12.6px;"><span style="font-size:10px;letter-spacing:-0.9px;-webkit-text-stroke:0">16</span>時</div>
</div>
<svg class="b" style="left:690.5px;top:197.0px" width="9" height="6"><polyline points="1,1 4.5,5 8,1" fill="none" stroke="#333" stroke-width="1"/></svg>
<div class="b" style="left:704px;top:193px;width:40px;height:12px;background:#E5E5E5;border:1px solid #ACACAC;"></div>
<div class="b" style="left:707px;top:194px;width:22px;height:12px;overflow:hidden">
<div class="t" style="left:0;top:0.3px;font-size:9px;line-height:12.6px;"><span style="font-size:10px;letter-spacing:-0.9px;-webkit-text-stroke:0">25</span>分</div>
</div>
<svg class="b" style="left:733.5px;top:197.0px" width="9" height="6"><polyline points="1,1 4.5,5 8,1" fill="none" stroke="#333" stroke-width="1"/></svg>
<div class="b" style="left:765px;top:192px;width:14px;height:14px;background:#E1E1E1;border:1px solid #ADADAD;"></div>
<svg class="b" style="left:767px;top:194px" width="12" height="12"><circle cx="6" cy="6" r="5" fill="none" stroke="#555" stroke-width="1"/><path d="M6,3 V6 H8" stroke="#555" fill="none"/></svg>
<div class="b" style="left:748px;top:192px;width:15px;height:15px;background:#E1E1E1;border:1px solid #ADADAD;"></div>
<svg class="b" style="left:751px;top:195px" width="11" height="11"><rect x="0" y="0" width="11" height="10" fill="#6DB8EE"/><rect x="3" y="3" width="8" height="7" fill="#EAF4FC"/><rect x="6" y="6" width="2" height="2" fill="#3070C0"/><rect x="8" y="4" width="2" height="1.5" fill="#5090D0"/><rect x="0" y="11" width="11" height="1" fill="#9AA8B8"/></svg>
<div class="b" style="left:784px;top:190px;width:13px;height:312px;background:#F0F0F0;"></div>
<div class="b" style="left:785px;top:204px;width:11px;height:268px;background:#CDCDCD;"></div>
<svg class="b" style="left:786.5px;top:194.2px" width="8" height="5.5"><polyline points="1,4.5 4.0,1 7,4.5" fill="none" stroke="#444" stroke-width="1.6"/></svg>
<svg class="b" style="left:786.5px;top:492.2px" width="8" height="5.5"><polyline points="1,1 4.0,4.5 7,1" fill="none" stroke="#444" stroke-width="1.6"/></svg>
<div class="t" style="left:547px;top:212.2px;font-size:9px;line-height:12.6px;color:#000;">女<span style="letter-spacing:-1.8px">の</span>子</div>
<div class="b" style="left:590px;top:211px;width:68px;height:13px;background:#E5E5E5;border:1px solid #ACACAC;"></div>
<div class="b" style="left:593px;top:212px;width:50px;height:13px;overflow:hidden">
<div class="t" style="left:0;top:0.8px;font-size:9px;line-height:12.6px;"><span style="letter-spacing:-1.8px">みか</span></div>
</div>
<svg class="b" style="left:647.5px;top:215.5px" width="9" height="6"><polyline points="1,1 4.5,5 8,1" fill="none" stroke="#333" stroke-width="1"/></svg>
<div class="t" style="left:687px;top:212.2px;font-size:9px;line-height:12.6px;color:#000;">指名</div>
<div class="b" style="left:709px;top:211px;width:69px;height:13px;background:#E5E5E5;border:1px solid #ACACAC;"></div>
<div class="b" style="left:712px;top:212px;width:51px;height:13px;overflow:hidden">
<div class="t" style="left:0;top:0.8px;font-size:9px;line-height:12.6px;"><span style="letter-spacing:-1.8px">フリー</span></div>
</div>
<svg class="b" style="left:767.5px;top:215.5px" width="9" height="6"><polyline points="1,1 4.5,5 8,1" fill="none" stroke="#333" stroke-width="1"/></svg>
<div class="t" style="left:547px;top:230.2px;font-size:9px;line-height:12.6px;color:#000;"><span style="letter-spacing:-1.8px">コース</span></div>
<div class="b" style="left:590px;top:229px;width:68px;height:13px;background:#E5E5E5;border:1px solid #ACACAC;"></div>
<div class="b" style="left:593px;top:230px;width:50px;height:13px;overflow:hidden">
<div class="t" style="left:0;top:0.8px;font-size:9px;line-height:12.6px;"><span style="font-size:10px;letter-spacing:-0.9px;-webkit-text-stroke:0">60</span>分</div>
</div>
<svg class="b" style="left:647.5px;top:233.5px" width="9" height="6"><polyline points="1,1 4.5,5 8,1" fill="none" stroke="#333" stroke-width="1"/></svg>
<div class="t" style="left:687px;top:230.2px;font-size:9px;line-height:12.6px;color:#000;">延長</div>
<div class="b" style="left:709px;top:229px;width:69px;height:13px;background:#E5E5E5;border:1px solid #ACACAC;"></div>
<div class="b" style="left:712px;top:230px;width:51px;height:13px;overflow:hidden">
<div class="t" style="left:0;top:0.8px;font-size:9px;line-height:12.6px;">延長<span style="letter-spacing:-1.8px">なし</span></div>
</div>
<svg class="b" style="left:767.5px;top:233.5px" width="9" height="6"><polyline points="1,1 4.5,5 8,1" fill="none" stroke="#333" stroke-width="1"/></svg>
<div class="t" style="left:547px;top:248.2px;font-size:9px;line-height:12.6px;color:#000;">待合<span style="letter-spacing:-1.8px">せ</span><span style="font-size:10px;letter-spacing:-0.9px;-webkit-text-stroke:0">1</span></div>
<div class="b" style="left:590px;top:247px;width:68px;height:13px;background:#E5E5E5;border:1px solid #ACACAC;"></div>
<div class="b" style="left:593px;top:248px;width:50px;height:13px;overflow:hidden">
<div class="t" style="left:0;top:0.8px;font-size:9px;line-height:12.6px;">待<span style="letter-spacing:-1.8px">ち</span>合<span style="letter-spacing:-1.8px">わせ</span>場所</div>
</div>
<svg class="b" style="left:647.5px;top:251.5px" width="9" height="6"><polyline points="1,1 4.5,5 8,1" fill="none" stroke="#333" stroke-width="1"/></svg>
<div class="t" style="left:676px;top:248.2px;font-size:9px;line-height:12.6px;color:#000;">交通費</div>
<div class="b" style="left:709px;top:247px;width:69px;height:13px;background:#E5E5E5;border:1px solid #ACACAC;"></div>
<div class="b" style="left:712px;top:248px;width:51px;height:13px;overflow:hidden">
<div class="t" style="left:0;top:0.8px;font-size:9px;line-height:12.6px;">交通費<span style="letter-spacing:-1.8px">なし</span></div>
</div>
<svg class="b" style="left:767.5px;top:251.5px" width="9" height="6"><polyline points="1,1 4.5,5 8,1" fill="none" stroke="#333" stroke-width="1"/></svg>
<div class="t" style="left:547px;top:265.7px;font-size:9px;line-height:12.6px;color:#000;"><span style="letter-spacing:-1.8px">ホテル</span></div>
<div class="b" style="left:590px;top:265px;width:70px;height:13px;background:#fff;border:1px solid #8F8F8F;"></div>
<div class="b" style="left:592px;top:267px;width:33px;height:11px;background:#0078D7;"></div>
<div class="t" style="left:593px;top:265.9px;font-size:9.5px;line-height:13.3px;color:#fff;"><span style="letter-spacing:-1.8px">ホテル</span><span style="font-size:10px;letter-spacing:-0.9px;-webkit-text-stroke:0">1</span></div>
<svg class="b" style="left:648.5px;top:269.5px" width="9" height="6"><polyline points="1,1 4.5,5 8,1" fill="none" stroke="#333" stroke-width="1"/></svg>
<div class="b" style="left:664px;top:265px;width:26px;height:13px;background:#E1E1E1;border:1px solid #ADADAD;"></div>
<div class="t" style="left:664px;top:265px;width:28px;height:15px;line-height:15px;text-align:center;font-size:9.5px;color:#000">地図</div>
<div class="b" style="left:709px;top:265px;width:69px;height:13px;background:#fff;border:1px solid #8F8F8F;"></div>
<div class="b" style="left:544px;top:282px;width:36px;height:13px;background:#E1E1E1;border:1px solid #ADADAD;"></div>
<div class="t" style="left:544px;top:282px;width:38px;height:15px;line-height:15px;text-align:center;font-size:9.5px;color:#000">ｵﾌﾟｼｮﾝ</div>
<div class="b" style="left:590px;top:283.5px;width:8px;height:8px;background:#fff;border:1px solid #444"></div>
<div class="t" style="left:602px;top:282.2px;font-size:9px;line-height:12.6px;color:#000;"><span style="letter-spacing:-1.8px">ローター</span></div>
<div class="b" style="left:644px;top:283.5px;width:8px;height:8px;background:#fff;border:1px solid #444"></div>
<div class="t" style="left:656px;top:282.2px;font-size:9px;line-height:12.6px;color:#000;"><span style="letter-spacing:-1.8px">パンスト</span></div>
<div class="b" style="left:698px;top:283.5px;width:8px;height:8px;background:#fff;border:1px solid #444"></div>
<div class="t" style="left:710px;top:282.2px;font-size:9px;line-height:12.6px;color:#000;"><span style="letter-spacing:-1.8px">ローション</span></div>
<div class="b" style="left:590px;top:295.9px;width:8px;height:8px;background:#fff;border:1px solid #444"></div>
<div class="t" style="left:602px;top:294.6px;font-size:9px;line-height:12.6px;color:#000;"><span style="letter-spacing:-1.8px">コスプレ</span></div>
<div class="b" style="left:643px;top:295.9px;width:8px;height:8px;background:#fff;border:1px solid #444"></div>
<div class="t" style="left:655px;top:294.6px;font-size:9px;line-height:12.6px;color:#000;">写真撮影</div>
<div class="b" style="left:707px;top:295.9px;width:8px;height:8px;background:#fff;border:1px solid #444"></div>
<div class="t" style="left:719px;top:294.6px;font-size:9px;line-height:12.6px;color:#000;"><span style="letter-spacing:-1.8px">バイブ</span></div>
<div class="b" style="left:590px;top:308.3px;width:8px;height:8px;background:#fff;border:1px solid #444"></div>
<div class="t" style="left:602px;top:307.0px;font-size:9px;line-height:12.6px;color:#000;"><span style="letter-spacing:-1.8px">オナニー</span></div>
<div class="b" style="left:647px;top:308.3px;width:8px;height:8px;background:#fff;border:1px solid #444"></div>
<div class="t" style="left:659px;top:307.0px;font-size:9px;line-height:12.6px;color:#000;">聖水</div>
<div class="b" style="left:690px;top:308.3px;width:8px;height:8px;background:#fff;border:1px solid #444"></div>
<div class="t" style="left:702px;top:307.0px;font-size:9px;line-height:12.6px;color:#000;">顔射</div>
<div class="b" style="left:590px;top:320.7px;width:8px;height:8px;background:#fff;border:1px solid #444"></div>
<div class="t" style="left:602px;top:319.4px;font-size:9px;line-height:12.6px;color:#000;">口内発射</div>
<div class="b" style="left:653px;top:320.7px;width:8px;height:8px;background:#fff;border:1px solid #444"></div>
<div class="t" style="left:665px;top:319.4px;font-size:9px;line-height:12.6px;color:#000;"><span style="letter-spacing:-1.8px">ごっくん</span></div>
<div class="b" style="left:705px;top:320.7px;width:8px;height:8px;background:#fff;border:1px solid #444"></div>
<div class="t" style="left:717px;top:319.4px;font-size:9px;line-height:12.6px;color:#000;"><span style="font-size:10px;letter-spacing:-0.9px;-webkit-text-stroke:0">AF</span></div>
<div class="t" style="left:547px;top:335.7px;font-size:9px;line-height:12.6px;color:#000;">割引</div>
<div class="b" style="left:590px;top:336px;width:68px;height:12px;background:#E5E5E5;border:1px solid #ACACAC;"></div>
<div class="b" style="left:593px;top:337px;width:50px;height:12px;overflow:hidden">
<div class="t" style="left:0;top:0.3px;font-size:9px;line-height:12.6px;"><span style="letter-spacing:-1.8px">なし</span></div>
</div>
<svg class="b" style="left:647.5px;top:340.0px" width="9" height="6"><polyline points="1,1 4.5,5 8,1" fill="none" stroke="#333" stroke-width="1"/></svg>
<div class="t" style="left:679px;top:335.7px;font-size:9px;line-height:12.6px;color:#000;"><span style="letter-spacing:-1.8px">その</span>他</div>
<div class="b" style="left:709px;top:336px;width:69px;height:12px;background:#E5E5E5;border:1px solid #ACACAC;"></div>
<div class="b" style="left:712px;top:337px;width:51px;height:12px;overflow:hidden">
<div class="t" style="left:0;top:0.3px;font-size:9px;line-height:12.6px;"><span style="letter-spacing:-1.8px">なし</span></div>
</div>
<svg class="b" style="left:767.5px;top:340.0px" width="9" height="6"><polyline points="1,1 4.5,5 8,1" fill="none" stroke="#333" stroke-width="1"/></svg>
<div class="t" style="left:547px;top:354.2px;font-size:9px;line-height:12.6px;color:#000;">ｽﾃｰﾀｽ<span style="font-size:10px;letter-spacing:-0.9px;-webkit-text-stroke:0">1</span></div>
<div class="b" style="left:590px;top:354px;width:68px;height:12px;background:#E5E5E5;border:1px solid #ACACAC;"></div>
<div class="b" style="left:593px;top:355px;width:50px;height:12px;overflow:hidden">
<div class="t" style="left:0;top:0.3px;font-size:9px;line-height:12.6px;">予約</div>
</div>
<svg class="b" style="left:647.5px;top:358.0px" width="9" height="6"><polyline points="1,1 4.5,5 8,1" fill="none" stroke="#333" stroke-width="1"/></svg>
<div class="t" style="left:674px;top:354.2px;font-size:9px;line-height:12.6px;color:#000;">ｽﾃｰﾀｽ<span style="font-size:10px;letter-spacing:-0.9px;-webkit-text-stroke:0">2</span></div>
<div class="b" style="left:709px;top:354px;width:69px;height:12px;background:#E5E5E5;border:1px solid #ACACAC;"></div>
<div class="b" style="left:712px;top:355px;width:51px;height:12px;overflow:hidden">
<div class="t" style="left:0;top:0.3px;font-size:9px;line-height:12.6px;">勤務前</div>
</div>
<svg class="b" style="left:767.5px;top:358.0px" width="9" height="6"><polyline points="1,1 4.5,5 8,1" fill="none" stroke="#333" stroke-width="1"/></svg>
<div class="t" style="left:547px;top:371.7px;font-size:9px;line-height:12.6px;color:#000;">料金合計</div>
<div class="b" style="left:590px;top:371px;width:70px;height:12px;background:#F0F0F0;border:1px solid #B5B5B5;"></div>
<div class="b" style="left:592px;top:372px;width:68px;height:12px;overflow:hidden">
<div class="t" style="left:0;top:0.3px;font-size:9px;line-height:12.6px;color:#000;"><span style="font-size:10px;letter-spacing:-0.9px;-webkit-text-stroke:0">0</span>円</div>
</div>
<div class="b" style="left:631px;top:371px;width:27px;height:12px;background:#E1E1E1;border:1px solid #ADADAD;"></div>
<div class="t" style="left:631px;top:371px;width:29px;height:14px;line-height:14px;text-align:center;font-size:9.5px;color:#000">計算</div>
<div class="t" style="left:667px;top:371.7px;font-size:9px;line-height:12.6px;color:#000;">料金補正</div>
<div class="b" style="left:709px;top:371px;width:69px;height:12px;background:#fff;border:1px solid #8F8F8F;"></div>
<div class="b" style="left:711px;top:372px;width:67px;height:12px;overflow:hidden">
<div class="t" style="left:0;top:0.3px;font-size:9px;line-height:12.6px;color:#000;"><span style="font-size:10px;letter-spacing:-0.9px;-webkit-text-stroke:0">0</span></div>
</div>
<div class="t" style="left:547px;top:389.2px;font-size:9px;line-height:12.6px;color:#000;">ｶ手数料</div>
<div class="b" style="left:590px;top:389px;width:70px;height:12px;background:#F0F0F0;border:1px solid #B5B5B5;"></div>
<div class="b" style="left:592px;top:390px;width:68px;height:12px;overflow:hidden">
<div class="t" style="left:0;top:0.3px;font-size:9px;line-height:12.6px;color:#000;"><span style="font-size:10px;letter-spacing:-0.9px;-webkit-text-stroke:0">0</span>円</div>
</div>
<div class="t" style="left:667px;top:389.2px;font-size:9px;line-height:12.6px;color:#000;">現支払分</div>
<div class="b" style="left:709px;top:389px;width:69px;height:12px;background:#fff;border:1px solid #8F8F8F;"></div>
<div class="t" style="left:547px;top:406.2px;font-size:9px;line-height:12.6px;color:#000;">給与合計</div>
<div class="b" style="left:590px;top:405px;width:70px;height:12px;background:#F0F0F0;border:1px solid #B5B5B5;"></div>
<div class="b" style="left:592px;top:406px;width:68px;height:12px;overflow:hidden">
<div class="t" style="left:0;top:0.3px;font-size:9px;line-height:12.6px;color:#000;"><span style="font-size:10px;letter-spacing:-0.9px;-webkit-text-stroke:0">0</span>円</div>
</div>
<div class="t" style="left:667px;top:406.2px;font-size:9px;line-height:12.6px;color:#000;">給与補正</div>
<div class="b" style="left:709px;top:405px;width:69px;height:12px;background:#fff;border:1px solid #8F8F8F;"></div>
<div class="b" style="left:711px;top:406px;width:67px;height:12px;overflow:hidden">
<div class="t" style="left:0;top:0.3px;font-size:9px;line-height:12.6px;color:#000;"><span style="font-size:10px;letter-spacing:-0.9px;-webkit-text-stroke:0">0</span></div>
</div>
<div class="t" style="left:547px;top:422.7px;font-size:9px;line-height:12.6px;color:#000;"><span style="font-size:10px;letter-spacing:-0.9px;-webkit-text-stroke:0">P</span>使用</div>
<div class="b" style="left:590px;top:423px;width:54px;height:12px;background:#fff;border:1px solid #8F8F8F;"></div>
<div class="b" style="left:592px;top:424px;width:52px;height:12px;overflow:hidden">
<div class="t" style="left:0;top:0.3px;font-size:9px;line-height:12.6px;color:#000;"><span style="font-size:10px;letter-spacing:-0.9px;-webkit-text-stroke:0">0</span></div>
</div>
<div class="b" style="left:633px;top:424px;width:12px;height:12px;background:#F0F0F0;"></div>
<div class="b" style="left:633px;top:429px;width:12px;height:1px;background:#ADADAD;"></div>
<svg class="b" style="left:635px;top:424px" width="8" height="12"><path d="M1,4 L4,1.5 L7,4 Z M1,8 L4,10.5 L7,8 Z" fill="#222"/></svg>
<div class="t" style="left:647px;top:423.2px;font-size:9px;line-height:12.6px;color:#000;"><span style="font-size:10px;letter-spacing:-0.9px;-webkit-text-stroke:0">(Max0)</span></div>
<div class="b" style="left:678px;top:422px;width:17px;height:13px;background:#E1E1E1;border:1px solid #ADADAD;"></div>
<div class="t" style="left:678px;top:422px;width:19px;height:15px;line-height:15px;text-align:center;font-size:9.5px;color:#000">全</div>
<div class="b" style="left:699px;top:422px;width:12px;height:13px;background:#E1E1E1;border:1px solid #ADADAD;"></div>
<div class="t" style="left:699px;top:422px;width:14px;height:15px;line-height:15px;text-align:center;font-size:9.5px;color:#000"><span style="font-size:10px;letter-spacing:-0.9px;-webkit-text-stroke:0">0</span></div>
<div class="t" style="left:547px;top:439.7px;font-size:9px;line-height:12.6px;color:#000;"><span style="font-size:10px;letter-spacing:-0.9px;-webkit-text-stroke:0">P</span>付与</div>
<div class="b" style="left:590px;top:440px;width:54px;height:12px;background:#F0F0F0;border:1px solid #B5B5B5;"></div>
<div class="b" style="left:592px;top:441px;width:52px;height:12px;overflow:hidden">
<div class="t" style="left:0;top:0.3px;font-size:9px;line-height:12.6px;color:#000;"><span style="font-size:10px;letter-spacing:-0.9px;-webkit-text-stroke:0">0</span></div>
</div>
<div class="b" style="left:633px;top:441px;width:12px;height:12px;background:#F0F0F0;"></div>
<div class="b" style="left:633px;top:446px;width:12px;height:1px;background:#ADADAD;"></div>
<svg class="b" style="left:635px;top:441px" width="8" height="12"><path d="M1,4 L4,1.5 L7,4 Z M1,8 L4,10.5 L7,8 Z" fill="#222"/></svg>
<div class="b" style="left:646px;top:441.5px;width:8px;height:8px;background:#fff;border:1px solid #444"></div>
<svg class="b" style="left:646px;top:441.5px" width="10" height="10"><polyline points="2,5 4,7.5 8,2.5" fill="none" stroke="#222" stroke-width="1.2"/></svg>
<div class="t" style="left:660px;top:439.7px;font-size:9px;line-height:12.6px;color:#000;">自動</div>
<div class="b" style="left:684px;top:439px;width:12px;height:13px;background:#E1E1E1;border:1px solid #ADADAD;"></div>
<div class="t" style="left:684px;top:439px;width:14px;height:15px;line-height:15px;text-align:center;font-size:9.5px;color:#000"><span style="font-size:10px;letter-spacing:-0.9px;-webkit-text-stroke:0">0</span></div>
<div class="t" style="left:547px;top:457.2px;font-size:9px;line-height:12.6px;color:#000;">ｽﾀｯﾌ</div>
<div class="b" style="left:590px;top:457px;width:68px;height:12px;background:#E5E5E5;border:1px solid #ACACAC;"></div>
<div class="b" style="left:593px;top:458px;width:50px;height:12px;overflow:hidden">
<div class="t" style="left:0;top:0.3px;font-size:9px;line-height:12.6px;"><span style="letter-spacing:-1.8px">スタッフ</span><span style="font-size:10px;letter-spacing:-0.9px;-webkit-text-stroke:0">1</span></div>
</div>
<svg class="b" style="left:647.5px;top:461.0px" width="9" height="6"><polyline points="1,1 4.5,5 8,1" fill="none" stroke="#333" stroke-width="1"/></svg>
<div class="t" style="left:686px;top:457.2px;font-size:9px;line-height:12.6px;color:#000;">媒体</div>
<div class="b" style="left:709px;top:457px;width:69px;height:12px;background:#E5E5E5;border:1px solid #ACACAC;"></div>
<div class="b" style="left:712px;top:458px;width:51px;height:12px;overflow:hidden">
<div class="t" style="left:0;top:0.3px;font-size:9px;line-height:12.6px;">会員</div>
</div>
<svg class="b" style="left:767.5px;top:461.0px" width="9" height="6"><polyline points="1,1 4.5,5 8,1" fill="none" stroke="#333" stroke-width="1"/></svg>
<div class="t" style="left:547px;top:474.7px;font-size:9px;line-height:12.6px;color:#000;"><span style="letter-spacing:-1.8px">メモ</span></div>
<div class="b" style="left:590px;top:475px;width:189px;height:26px;background:#fff;border:1px solid #8F8F8F;"></div>
<div class="b" style="left:767px;top:476px;width:13px;height:26px;background:#F0F0F0;"></div>
<svg class="b" style="left:769.0px;top:480.0px" width="9" height="6"><polyline points="1,5 4.5,1 8,5" fill="none" stroke="#A8A8A8" stroke-width="1"/></svg>
<div class="b" style="left:3px;top:508px;width:47px;height:16px;background:#E1E1E1;border:1px solid #ADADAD;"></div>
<div class="t" style="left:3px;top:508px;width:49px;height:18px;line-height:18px;text-align:center;font-size:9.5px;color:#000"><span style="letter-spacing:-1.8px">メール</span></div>
<div class="b" style="left:55px;top:508px;width:53px;height:16px;background:#E5E5E5;border:1px solid #ACACAC;"></div>
<div class="b" style="left:58px;top:509px;width:35px;height:16px;overflow:hidden">
<div class="t" style="left:0;top:2.3px;font-size:9px;line-height:12.6px;"><span style="letter-spacing:-1.8px">コピー</span></div>
</div>
<svg class="b" style="left:97.5px;top:514.0px" width="9" height="6"><polyline points="1,1 4.5,5 8,1" fill="none" stroke="#333" stroke-width="1"/></svg>
<div class="b" style="left:124px;top:508px;width:45px;height:16px;background:#E1E1E1;border:1px solid #ADADAD;"></div>
<div class="t" style="left:124px;top:508px;width:47px;height:18px;line-height:18px;text-align:center;font-size:9.5px;color:#000">顧客変更</div>
<div class="b" style="left:187px;top:508px;width:45px;height:16px;background:#E1E1E1;border:1px solid #ADADAD;"></div>
<div class="t" style="left:187px;top:508px;width:47px;height:18px;line-height:18px;text-align:center;font-size:9.5px;color:#000">新規予約</div>
<div class="b" style="left:241px;top:508px;width:72px;height:16px;background:#E1E1E1;border:1px solid #ADADAD;"></div>
<div class="t" style="left:241px;top:508px;width:74px;height:18px;line-height:18px;text-align:center;font-size:9.5px;color:#000">顧客<span style="letter-spacing:-1.8px">の</span>新規予約</div>
<div class="b" style="left:325px;top:508px;width:44px;height:16px;background:#E1E1E1;border:1px solid #ADADAD;"></div>
<div class="t" style="left:325px;top:508px;width:46px;height:18px;line-height:18px;text-align:center;font-size:9.5px;color:#000">電話発信</div>
<div class="b" style="left:386px;top:508px;width:36px;height:16px;background:#E1E1E1;border:1px solid #ADADAD;"></div>
<div class="t" style="left:386px;top:508px;width:38px;height:18px;line-height:18px;text-align:center;font-size:9.5px;color:#000"><span style="font-size:10px;letter-spacing:-0.9px;-webkit-text-stroke:0">SMS</span></div>
<div class="b" style="left:567px;top:512.0px;width:8px;height:8px;background:#fff;border:1px solid #444"></div>
<div class="t" style="left:580px;top:510.7px;font-size:9px;line-height:12.6px;color:#000;">最前面</div>
<div class="b" style="left:618px;top:508px;width:54px;height:16px;background:#E1E1E1;border:1px solid #ADADAD;"></div>
<div class="t" style="left:618px;top:508px;width:56px;height:18px;line-height:18px;text-align:center;font-size:9.5px;color:#000">変更<span style="letter-spacing:-1.8px">を</span>保存</div>
<div class="b" style="left:740px;top:508px;width:53px;height:16px;background:#E1E1E1;border:1px solid #ADADAD;"></div>
<div class="t" style="left:740px;top:508px;width:55px;height:18px;line-height:18px;text-align:center;font-size:9.5px;color:#000">閉<span style="letter-spacing:-1.8px">じる</span></div>
<div class="b" style="left:742px;top:184px;width:20px;height:22px;border:5px solid #E60012"></div>
</body></html>
